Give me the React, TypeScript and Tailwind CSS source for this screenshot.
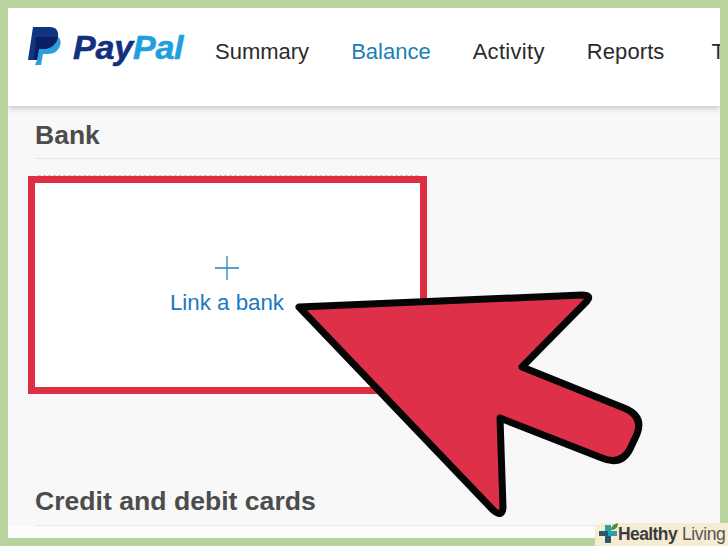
const NAV_ITEMS = [
  { label: "Summary", className: "" },
  { label: "Balance", className: "text-[#1c7fb6]" },
  { label: "Activity", className: "tracking-[0.3px]" },
  { label: "Reports", className: "tracking-[0.1px]" },
  { label: "T", className: "ml-[5px]" },
];

const PayPalMark = () => (
  <svg width="33" height="38" viewBox="0 0 33 38" className="shrink-0">
    <path d="M9 33 L11 22 H16 C23 22 29 17 30 10 C33 12 33 16 32 19 C30 24 26 27 20 27 H15 L13 38 H7 Z" fill="#2a9fe0" />
    <path d="M5 0 H22 C28 0 31 4 30 10 C29 17 23 22 16 22 H11 L9 33 H0 Z" fill="#10357f" />
    <path d="M8 10 H30 C29 17 23 22 16 22 H11 L9 33 H6 Z" fill="#0a1f63" />
  </svg>
);

const App = () => {
  return (
    <div className="relative w-[728px] h-[546px] overflow-hidden bg-[#b9d39d] p-2 font-['Liberation_Sans',sans-serif]">
      <div className="flex flex-col h-[530px] w-[712px] overflow-hidden bg-[#f8f8f9]">
        <header className="relative flex h-[98px] shrink-0 bg-white pl-5 pt-[19px] shadow-[0_2px_6px_rgba(0,0,0,0.22)]">
          <div className="flex items-start h-10 w-[157px] shrink-0">
            <PayPalMark />
            <span className="ml-[12px] mt-[2px] text-[34px] leading-9 font-bold italic tracking-[-0.2px] text-[#12307f] [-webkit-text-stroke:0.6px_#12307f]">
              Pay<span className="text-[#1f9fdf] [-webkit-text-stroke:0.6px_#1f9fdf]">Pal</span>
            </span>
          </div>
          <nav className="ml-[30px] flex gap-[42px] pt-[11px] text-[22px] leading-[28px] whitespace-nowrap text-[#2b2b2b]">
            {NAV_ITEMS.map((item) => (
              <span key={item.label} className={item.className}>
                {item.label}
              </span>
            ))}
          </nav>
        </header>

        <section className="pl-[27px] pt-[15px]">
          <h2 className="text-[26.5px] leading-[28px] font-bold text-[#4c4c4c]">Bank</h2>
          <div className="mt-[9px] h-px bg-[#e8e8e8]" />
        </section>

        <div className="ml-5 mt-4">
          <div className="ml-[10px] w-[380px] border-t border-dashed border-[#c4c4c4]" />
          <div className="flex h-[218px] w-[399px] flex-col items-center border-[7px] border-[#df2e42] bg-white pr-px pt-[73px]">
            <svg width="24" height="24" viewBox="0 0 24 24" className="shrink-0">
              <path d="M12 0 V24 M0 12 H24" stroke="#2a80bf" strokeWidth="1.3" fill="none" />
            </svg>
            <span className="mt-[10px] text-[22.3px] leading-[26px] text-[#1b78c2]">Link a bank</span>
          </div>
        </div>

        <section className="mt-[93px] pl-[27px]">
          <h2 className="text-[26.6px] leading-[28px] font-bold text-[#4c4c4c]">Credit and debit cards</h2>
          <div className="mt-[10px] h-px bg-[#e8e8e8]" />
        </section>
        <div className="flex-1 bg-[#fcfcfc]" />
      </div>

      {/* arrow annotation */}
      <svg width="728" height="546" viewBox="0 0 728 546" className="absolute left-0 top-0">
        <path
          d="M299 307 L582 295 Q592 295 587 301 L522 367 L624 408 Q644 416 637 434 L630 449 Q621 466 602 458 L500 418 L503 508 Q502 518 493 510 Z"
          fill="#df3049"
          stroke="#050505"
          strokeWidth="7"
          strokeLinejoin="round"
        />
      </svg>

      {/* watermark */}
      <div className="absolute bottom-0 right-0 flex h-[23px] w-[133px] items-center rounded-tl-lg bg-[#f6ecd3] pl-[3px] text-[17.5px] leading-[23px] whitespace-nowrap text-[#3c3c3c]">
        <svg width="20" height="23" viewBox="0 0 20 23" className="shrink-0">
          <path d="M7 2 H13 V8 H19 V13 H13 V20 H7 V13 H1 V8 H7 Z" fill="#2aa0ac" />
          <path d="M1 8 H10 V13 H13 V20 H7 V13 H1 Z" fill="#2b5a6e" />
          <path d="M13 7 C13 3 16 1 20 0 C20 4 18 7 13 7 Z" fill="#4f8f3a" />
        </svg>
        <span className="font-bold tracking-[-0.6px]">Healthy</span>
        <span className="ml-[5px] tracking-[-0.4px] text-[#555]">Living</span>
      </div>
    </div>
  );
};

export default App;
